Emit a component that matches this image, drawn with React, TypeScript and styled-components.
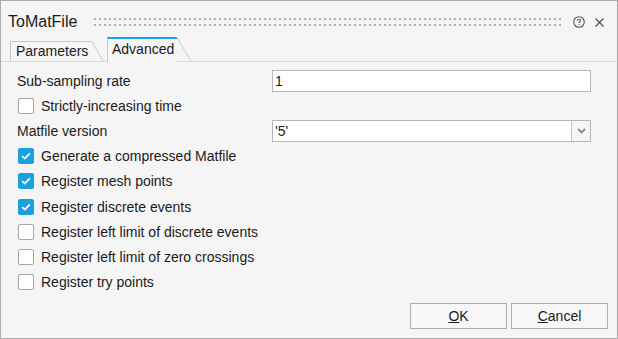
import React from "react";
import styled, { createGlobalStyle } from "styled-components";

const GlobalStyle = createGlobalStyle`
  html, body {
    margin: 0;
    padding: 0;
    background: #f5f5f5;
  }
  body {
    font-family: "Liberation Sans", Arial, sans-serif;
  }
  * {
    box-sizing: border-box;
  }
`;

const Window = styled.div`
  width: 618px;
  height: 339px;
  border: 1px solid #ababab;
  background: #f5f5f5;
  display: flex;
  flex-direction: column;
  color: #1b1b1b;
  font-size: 14px;
`;

const TitleBar = styled.div`
  height: 36px;
  padding: 6px 13px 0 7px;
  display: flex;
  align-items: center;
`;

const Title = styled.span`
  font-size: 16px;
  color: #1b1b1b;
`;

// two rows of small square dots, the drag handle of the dialog
const Grip = styled.div`
  flex: 1;
  height: 8px;
  margin: 0 11px 0 17px;
  background-image: conic-gradient(at 2px 2px, transparent 75%, #b0b0b0 0);
  background-size: 5px 6px;
`;

const IconButton = styled.span<{ $gap?: number }>`
  display: flex;
  align-items: center;
  margin-left: ${(p) => p.$gap ?? 0}px;
  color: #555;
`;

const TabStrip = styled.div`
  height: 25px;
  padding-left: 9px;
  display: flex;
  align-items: flex-end;
  gap: 16px;
  border-bottom: 1px solid #d9d9d9;
`;

const Tab = styled.div<{ $active?: boolean; $width: number }>`
  position: relative;
  width: ${(p) => p.$width}px;
  height: ${(p) => (p.$active ? 25 : 20)}px;
  margin-bottom: ${(p) => (p.$active ? -1 : 0)}px;
  padding: 0 0 ${(p) => (p.$active ? 3 : 1)}px
    ${(p) => (p.$active ? 4 : 5)}px;
  display: flex;
  align-items: center;
  background: #f5f5f5;
  border-left: 1px solid #c8c8c8;
  border-top: ${(p) => (p.$active ? "2px solid #1ba1e2" : "1px solid #c8c8c8")};
  white-space: nowrap;

  &::after {
    content: "";
    position: absolute;
    top: -1px;
    right: -1px;
    bottom: ${(p) => (p.$active ? 1 : 0)}px;
    width: 1px;
    background: #c8c8c8;
    transform: skewX(30deg);
    transform-origin: top left;
  }
`;

const Content = styled.div`
  padding: 6px 26px 0 16px;
  display: grid;
  grid-template-columns: 255px 1fr;
  grid-auto-rows: 25.2px;
  align-items: center;
`;

const Label = styled.span`
  grid-column: 1;
`;

const Field = styled.div`
  grid-column: 2;
  height: 22px;
  border: 1px solid #b7b7b7;
  background: #fff;
  display: flex;
  align-items: center;
  padding-left: 2px;
`;

const FieldText = styled.span`
  flex: 1;
`;

const DropButton = styled.span`
  width: 19px;
  height: 100%;
  border-left: 1px solid #c4c4c4;
  background: #f5f5f5;
  display: flex;
  align-items: center;
  justify-content: center;
`;

const CheckRow = styled.label`
  grid-column: 1 / -1;
  display: flex;
  align-items: center;
  gap: 7px;
  padding-left: 1px;
`;

const Box = styled.span<{ $checked?: boolean }>`
  width: 16px;
  height: 16px;
  border-radius: 2px;
  display: flex;
  align-items: center;
  justify-content: center;
  background: ${(p) => (p.$checked ? "#1ba1e2" : "#fff")};
  border: 1px solid ${(p) => (p.$checked ? "#1ba1e2" : "#a6a6a6")};
`;

const Footer = styled.div`
  margin-top: auto;
  display: flex;
  justify-content: flex-end;
  gap: 4px;
  padding: 0 9px 9px 0;
`;

const Button = styled.button`
  width: 97px;
  height: 26px;
  border: 1px solid #adadad;
  background: #f7f7f7;
  font-family: inherit;
  font-size: 14px;
  color: #1b1b1b;
  padding: 0;
`;

function HelpIcon() {
  return (
    <svg width="12" height="12" viewBox="0 0 12 12" fill="none">
      <circle cx="6" cy="6" r="5.3" stroke="#555" strokeWidth="1.1" />
      <path
        d="M4.4 4.8c0-1 .7-1.6 1.6-1.6s1.6.6 1.6 1.4c0 1.1-1.5 1.1-1.5 2.3"
        stroke="#555"
        strokeWidth="1.1"
      />
      <circle cx="6.1" cy="8.6" r="0.7" fill="#555" />
    </svg>
  );
}

function CloseIcon() {
  return (
    <svg width="9" height="9" viewBox="0 0 9 9" fill="none">
      <path d="M0.5 0.5l8 8M8.5 0.5l-8 8" stroke="#555" strokeWidth="1.3" />
    </svg>
  );
}

function Chevron() {
  return (
    <svg width="9" height="6" viewBox="0 0 9 6" fill="none">
      <path d="M1 1l3.5 3.5L8 1" stroke="#8a8a8a" strokeWidth="1.8" />
    </svg>
  );
}

function Checkbox({ label, checked }: { label: string; checked?: boolean }) {
  return (
    <CheckRow>
      <Box $checked={checked}>
        {checked ? (
          <svg width="10" height="8" viewBox="0 0 10 8" fill="none">
            <path
              d="M1.2 4.2l2.6 2.4L8.8 1.4"
              stroke="#fff"
              strokeWidth="1.7"
            />
          </svg>
        ) : null}
      </Box>
      {label}
    </CheckRow>
  );
}

const options = [
  { label: "Generate a compressed Matfile", checked: true },
  { label: "Register mesh points", checked: true },
  { label: "Register discrete events", checked: true },
  { label: "Register left limit of discrete events", checked: false },
  { label: "Register left limit of zero crossings", checked: false },
  { label: "Register try points", checked: false },
];

export default function App() {
  return (
    <>
      <GlobalStyle />
      <Window>
        <TitleBar>
          <Title>ToMatFile</Title>
          <Grip />
          <IconButton>
            <HelpIcon />
          </IconButton>
          <IconButton $gap={10}>
            <CloseIcon />
          </IconButton>
        </TitleBar>
        <TabStrip>
          <Tab $width={81}>Parameters</Tab>
          <Tab $width={70} $active>
            Advanced
          </Tab>
        </TabStrip>
        <Content>
          <Label>Sub-sampling rate</Label>
          <Field>
            <FieldText>1</FieldText>
          </Field>
          <Checkbox label="Strictly-increasing time" />
          <Label>Matfile version</Label>
          <Field>
            <FieldText>'5'</FieldText>
            <DropButton>
              <Chevron />
            </DropButton>
          </Field>
          {options.map((o) => (
            <Checkbox key={o.label} label={o.label} checked={o.checked} />
          ))}
        </Content>
        <Footer>
          <Button>
            <u>O</u>K
          </Button>
          <Button>
            <u>C</u>ancel
          </Button>
        </Footer>
      </Window>
    </>
  );
}
